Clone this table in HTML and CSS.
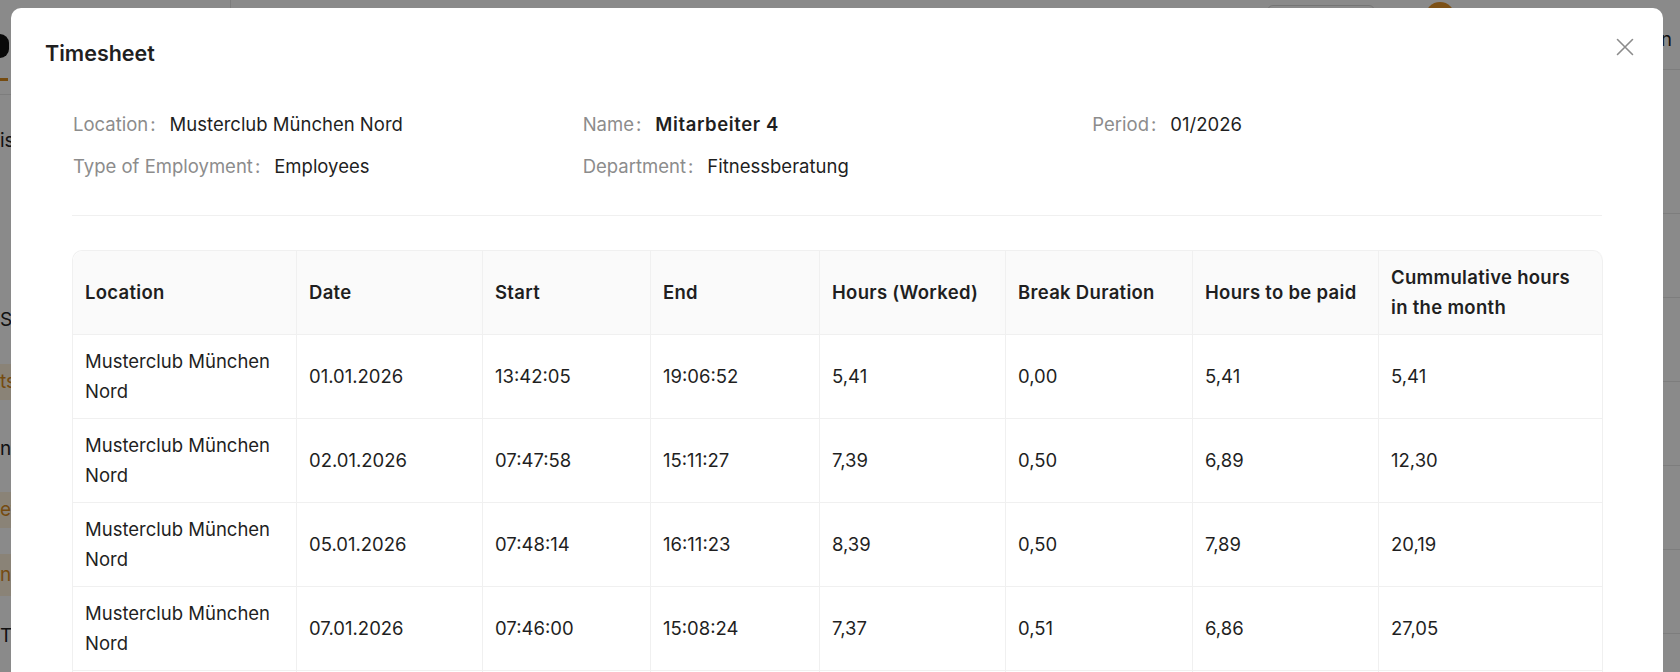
FILE: index.html
```html
<!DOCTYPE html>
<html lang="de">
<head>
<meta charset="utf-8">
<title>Timesheet</title>
<link rel="stylesheet" href="styles.css">
</head>
<body>
<div class="app">
  <aside class="sidebar">
    <div class="logo"><span class="logo-mark"></span></div>
    <div class="logo-sub"><span class="logo-dot"></span></div>
    <nav class="menu">
      <div class="menu-item m1">is</div>
      <div class="menu-item m2">S</div>
      <div class="menu-item m3 active">ts</div>
      <div class="menu-item m4">nb</div>
      <div class="menu-item m5 active">et</div>
      <div class="menu-item m6 active">ne</div>
      <div class="menu-item m7">T</div>
    </nav>
  </aside>
  <main class="main">
    <header class="topbar">
      <div class="top-btn"></div>
      <div class="avatar"></div>
      <div class="user">n</div>
    </header>
    <div class="content">
      <div class="bg-row"></div>
      <div class="bg-row"></div>
      <div class="bg-row"></div>
      <div class="bg-row"></div>
      <div class="bg-row"></div>
      <div class="bg-row"></div>
    </div>
  </main>
</div>
<div class="mask"></div>
<div class="modal" role="dialog">
  <div class="modal-head">
    <h1 class="modal-title">Timesheet</h1>
    <button class="close" aria-label="Close">
      <svg width="18" height="18" viewBox="0 0 18 18"><path d="M1.5 1.5 L16.5 16.5 M16.5 1.5 L1.5 16.5" stroke="#8c8c8c" stroke-width="1.6" fill="none" stroke-linecap="round"/></svg>
    </button>
  </div>
  <div class="modal-body">
    <div class="info">
      <div class="info-item"><span class="label">Location</span><span class="value">Musterclub München Nord</span></div>
      <div class="info-item"><span class="label">Name</span><span class="value strong">Mitarbeiter 4</span></div>
      <div class="info-item"><span class="label">Period</span><span class="value">01/2026</span></div>
      <div class="info-item"><span class="label">Type of Employment</span><span class="value">Employees</span></div>
      <div class="info-item"><span class="label">Department</span><span class="value">Fitnessberatung</span></div>
    </div>
    <div class="divider"></div>
    <table class="sheet">
      <colgroup>
        <col class="c-loc"><col class="c-date"><col class="c-start"><col class="c-end"><col class="c-worked"><col class="c-break"><col class="c-paid"><col class="c-cum">
      </colgroup>
      <thead>
        <tr><th>Location</th><th>Date</th><th>Start</th><th>End</th><th>Hours (Worked)</th><th>Break Duration</th><th>Hours to be paid</th><th>Cummulative hours in the month</th></tr>
      </thead>
      <tbody>
        <tr><td>Musterclub München Nord</td><td>01.01.2026</td><td>13:42:05</td><td>19:06:52</td><td>5,41</td><td>0,00</td><td>5,41</td><td>5,41</td></tr>
        <tr><td>Musterclub München Nord</td><td>02.01.2026</td><td>07:47:58</td><td>15:11:27</td><td>7,39</td><td>0,50</td><td>6,89</td><td>12,30</td></tr>
        <tr><td>Musterclub München Nord</td><td>05.01.2026</td><td>07:48:14</td><td>16:11:23</td><td>8,39</td><td>0,50</td><td>7,89</td><td>20,19</td></tr>
        <tr><td>Musterclub München Nord</td><td>07.01.2026</td><td>07:46:00</td><td>15:08:24</td><td>7,37</td><td>0,51</td><td>6,86</td><td>27,05</td></tr>
        <tr class="tail"><td></td><td></td><td></td><td></td><td></td><td></td><td></td><td></td></tr>
      </tbody>
    </table>
  </div>
</div>
</body>
</html>
```
FILE: styles.css
```css
* { box-sizing: border-box; }
html, body { margin: 0; padding: 0; }
body {
  width: 1680px;
  height: 672px;
  overflow: hidden;
  font-family: "Inter", "Liberation Sans", sans-serif;
  color: #1f1f1f;
  background: #ffffff;
}

/* background application */
.app { display: flex; height: 672px; }
.sidebar {
  width: 231px;
  flex: none;
  background: #fff;
  border-right: 1px solid #e8e8e8;
  padding-top: 34px;
}
.logo { height: 34px; display: flex; align-items: flex-start; }
.logo-mark { width: 9px; height: 24px; background: #111; border-radius: 0 10px 10px 0; }
.logo-sub { height: 26px; padding-top: 10px; }
.logo-dot { display: block; width: 8px; height: 3px; background: #d98b1f; }
.menu { display: flex; flex-direction: column; border-top: 1px solid #e8e8e8; padding-top: 28px; }
.menu-item { font-size: 19px; height: 36px; line-height: 36px; color: #222; white-space: nowrap; }
.menu-item.active { background: #fff3dd; color: #d98b1f; height: 36px; }
.m2 { margin-top: 143px; }
.m3 { margin-top: 26px; }
.m4 { margin-top: 31px; }
.m5 { margin-top: 25px; }
.m6 { margin-top: 26px; height: 42px !important; line-height: 42px !important; }
.m7 { margin-top: 22px; }
.main { flex: 1; display: flex; flex-direction: column; }
.topbar {
  height: 70px;
  background: #fff;
  border-bottom: 1px solid #e8e8e8;
  display: flex;
  align-items: flex-start;
  justify-content: flex-end;
}
.top-btn { width: 108px; height: 40px; border: 1px solid #d9d9d9; border-radius: 6px; margin-top: 5px; margin-right: 50px; }
.avatar { width: 30px; height: 30px; border-radius: 50%; background: #e8962a; margin-top: 2px; margin-right: 206px; }
.user { font-size: 19px; line-height: 24px; margin-top: 28px; margin-right: 8px; }
.content { padding-top: 60px; }
.bg-row { height: 84px; border-bottom: 1px solid #e8e8e8; }

.mask {
  position: fixed;
  inset: 0;
  background: rgba(0, 0, 0, 0.46);
}

/* modal */
.modal {
  position: absolute;
  top: 8px;
  left: 11px;
  width: 1652px;
  height: 664px;
  overflow: hidden;
  background: #fff;
  border-radius: 10px 10px 0 0;
  padding: 30px 34px 0;
}
.modal-head { display: flex; justify-content: space-between; align-items: center; height: 30px; }
.modal-title { margin: 0; font-size: 21.5px; font-weight: 600; line-height: 30px; color: #1f1f1f; }
.close {
  border: 0;
  background: none;
  padding: 0;
  width: 18px;
  height: 18px;
  margin-right: -5px;
  margin-top: -12px;
  display: flex;
}
.modal-body { padding: 41px 27px 0; }

.info {
  display: grid;
  grid-template-columns: repeat(3, 1fr);
  row-gap: 12px;
  padding-left: 1px;
}
.info-item { font-size: 18.5px; line-height: 30px; display: flex; }
.label { color: #8c8c8c; }
.label::after { content: ":"; margin: 0 14px 0 2px; }
.value { color: #1f1f1f; }
.value.strong { font-weight: 600; letter-spacing: 0.6px; }

.divider { height: 1px; background: #f0f0f0; margin: 34px 0 34px; }

.sheet {
  width: 1530px;
  table-layout: fixed;
  border-collapse: separate;
  border-spacing: 0;
  border-top: 1px solid #f0f0f0;
  border-left: 1px solid #f0f0f0;
  border-radius: 10px 10px 0 0;
  font-size: 18.5px;
}
.c-loc { width: 224px; }
.c-date { width: 186px; }
.c-start { width: 168px; }
.c-end { width: 169px; }
.c-worked { width: 186px; }
.c-break { width: 187px; }
.c-paid { width: 186px; }
.c-cum { width: 224px; }
.sheet th, .sheet td {
  text-align: left;
  vertical-align: middle;
  line-height: 30px;
  padding: 11px 12px 12px;
  border-right: 1px solid #f0f0f0;
  border-bottom: 1px solid #f0f0f0;
}
.sheet th {
  background: #fafafa;
  font-weight: 600;
  letter-spacing: 0.3px;
  color: #1f1f1f;
}
.sheet thead th:first-child { border-top-left-radius: 10px; }
.sheet thead th:last-child { border-top-right-radius: 10px; }
.sheet td { color: #1f1f1f; }
.sheet .tail td { height: 40px; }
```
